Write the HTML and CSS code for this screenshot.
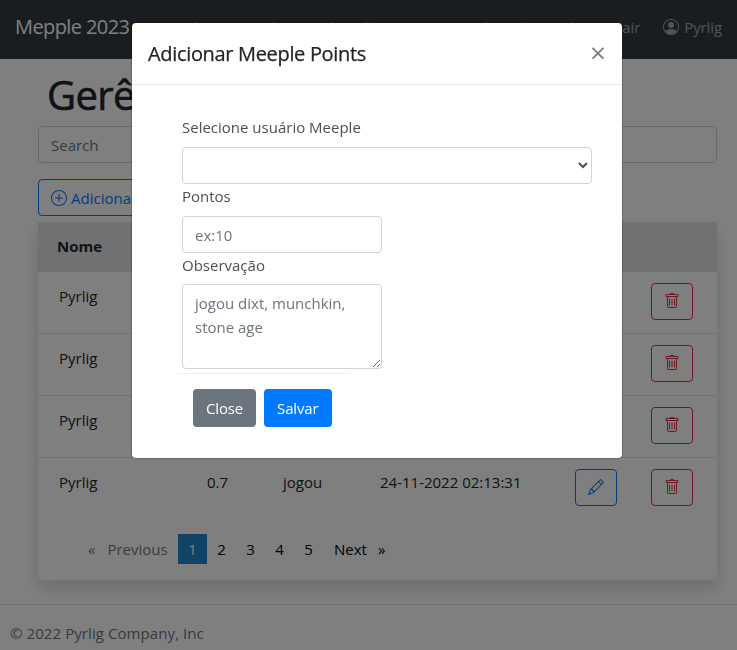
FILE: index.html
```html
<!DOCTYPE html>
<html lang="pt">
<head>
<meta charset="utf-8">
<title>Meeple 2023</title>
<link rel="stylesheet" href="styles.css">
</head>
<body>
<nav class="navbar">
  <a class="brand">Mepple 2023</a>
  <div class="nav-links">
    <a>Ranking Pessoal</a>
    <a>Ranking de Grupos</a>
    <a>Ranking de Membros</a>
  </div>
  <div class="nav-right">
    <a>Sair</a>
    <a class="user">
      <svg class="icon-user" viewBox="0 0 16 16" fill="currentColor"><path d="M11 6a3 3 0 1 1-6 0 3 3 0 0 1 6 0z"/><path fill-rule="evenodd" d="M0 8a8 8 0 1 1 16 0A8 8 0 0 1 0 8zm8-7a7 7 0 0 0-5.468 11.37C3.242 11.226 4.805 10 8 10s4.757 1.225 5.468 2.37A7 7 0 0 0 8 1z"/></svg>
      Pyrlig
    </a>
  </div>
</nav>
<main class="content">
  <h1 class="title">Gerênciar Pontos</h1>
  <input class="search" type="text" placeholder="Search">
  <button class="btn-add">
    <svg class="icon-plus" viewBox="0 0 16 16" fill="currentColor"><path d="M8 15A7 7 0 1 1 8 1a7 7 0 0 1 0 14zm0 1A8 8 0 1 0 8 0a8 8 0 0 0 0 16z"/><path d="M8 4a.5.5 0 0 1 .5.5v3h3a.5.5 0 0 1 0 1h-3v3a.5.5 0 0 1-1 0v-3h-3a.5.5 0 0 1 0-1h3v-3A.5.5 0 0 1 8 4z"/></svg>
    Adicionar Pontos
  </button>
  <section class="card">
    <table class="table">
      <thead>
        <tr><th>Nome</th><th>Pontos</th><th>Obs</th><th>Data</th><th></th><th></th></tr>
      </thead>
      <tbody>
        <tr><td>Pyrlig</td><td>1.2</td><td>jogou</td><td>24-11-2022 02:20:10</td>
          <td><button class="icon-btn edit"><svg viewBox="0 0 16 16" fill="currentColor"><use href="#pencil"/></svg></button></td>
          <td><button class="icon-btn del"><svg viewBox="0 0 16 16" fill="currentColor"><use href="#trash"/></svg></button></td></tr>
        <tr><td>Pyrlig</td><td>0.5</td><td>jogou</td><td>24-11-2022 02:18:44</td>
          <td><button class="icon-btn edit"><svg viewBox="0 0 16 16" fill="currentColor"><use href="#pencil"/></svg></button></td>
          <td><button class="icon-btn del"><svg viewBox="0 0 16 16" fill="currentColor"><use href="#trash"/></svg></button></td></tr>
        <tr><td>Pyrlig</td><td>0.9</td><td>jogou</td><td>24-11-2022 02:15:02</td>
          <td><button class="icon-btn edit"><svg viewBox="0 0 16 16" fill="currentColor"><use href="#pencil"/></svg></button></td>
          <td><button class="icon-btn del"><svg viewBox="0 0 16 16" fill="currentColor"><use href="#trash"/></svg></button></td></tr>
        <tr><td>Pyrlig</td><td>0.7</td><td>jogou</td><td>24-11-2022 02:13:31</td>
          <td><button class="icon-btn edit"><svg viewBox="0 0 16 16" fill="currentColor"><use href="#pencil"/></svg></button></td>
          <td><button class="icon-btn del"><svg viewBox="0 0 16 16" fill="currentColor"><use href="#trash"/></svg></button></td></tr>
      </tbody>
    </table>
    <ul class="pagination">
      <li class="disabled"><span class="chev">«</span>Previous</li>
      <li class="page current">1</li>
      <li class="page">2</li>
      <li class="page">3</li>
      <li class="page">4</li>
      <li class="page">5</li>
      <li class="more">Next<span class="chev next">»</span></li>
    </ul>
  </section>
</main>
<footer class="footer">© 2022 Pyrlig Company, Inc</footer>

<svg class="defs" aria-hidden="true">
  <symbol id="pencil" viewBox="0 0 16 16"><path d="M12.146.146a.5.5 0 0 1 .708 0l3 3a.5.5 0 0 1 0 .708l-10 10a.5.5 0 0 1-.168.11l-5 2a.5.5 0 0 1-.65-.65l2-5a.5.5 0 0 1 .11-.168l10-10zM11.207 2.5 13.5 4.793 14.793 3.5 12.5 1.207 11.207 2.5zm1.586 3L10.5 3.207 4 9.707V10h.5a.5.5 0 0 1 .5.5v.5h.5a.5.5 0 0 1 .5.5v.5h.293l6.5-6.5zm-9.761 5.175-.106.106-1.528 3.821 3.821-1.528.106-.106A.5.5 0 0 1 5 12.5V12h-.5a.5.5 0 0 1-.5-.5V11h-.5a.5.5 0 0 1-.468-.325z"/></symbol>
  <symbol id="trash" viewBox="0 0 16 16"><path d="M5.5 5.5A.5.5 0 0 1 6 6v6a.5.5 0 0 1-1 0V6a.5.5 0 0 1 .5-.5zm2.5 0a.5.5 0 0 1 .5.5v6a.5.5 0 0 1-1 0V6a.5.5 0 0 1 .5-.5zm3 .5a.5.5 0 0 0-1 0v6a.5.5 0 0 0 1 0V6z"/><path fill-rule="evenodd" d="M14.5 3a1 1 0 0 1-1 1H13v9a2 2 0 0 1-2 2H5a2 2 0 0 1-2-2V4h-.5a1 1 0 0 1-1-1V2a1 1 0 0 1 1-1H6a1 1 0 0 1 1-1h2a1 1 0 0 1 1 1h3.5a1 1 0 0 1 1 1v1zM4.118 4 4 4.059V13a1 1 0 0 0 1 1h6a1 1 0 0 0 1-1V4.059L11.882 4H4.118zM2.5 3V2h11v1h-11z"/></symbol>
</svg>

<div class="backdrop"></div>
<div class="modal" role="dialog">
  <header class="modal-header">
    <h5 class="modal-title">Adicionar Meeple Points</h5>
    <span class="close">×</span>
  </header>
  <form class="modal-body">
    <label class="label first">Selecione usuário Meeple</label>
    <select class="control select"><option></option></select>
    <label class="label">Pontos</label>
    <input class="control short" type="text" placeholder="ex:10">
    <label class="label">Observação</label>
    <textarea class="control short area" placeholder="jogou dixt, munchkin, stone age"></textarea>
    <hr class="rule">
    <div class="actions">
      <button type="button" class="btn btn-close">Close</button>
      <button type="button" class="btn btn-save">Salvar</button>
    </div>
  </form>
</div>
</body>
</html>
```
FILE: styles.css
```css
* { box-sizing: border-box; }
html, body { height: 100%; }
body {
  margin: 0;
  height: 650px;
  overflow: hidden;
  background: #fff;
  color: #212529;
  font-family: "Open Sans", "Noto Sans", sans-serif;
  font-size: 15px;
  line-height: 24px;
}
.defs { display: none; }

.navbar {
  display: flex;
  align-items: center;
  height: 59px;
  padding: 0 15px 5px;
  background: #343a40;
  color: rgba(255, 255, 255, .55);
  white-space: nowrap;
}
.brand { font-size: 20px; letter-spacing: -0.6px; color: #fff; margin-right: 39px; }
.nav-links { display: flex; gap: 29px; letter-spacing: -0.4px; }
.nav-right { display: flex; align-items: center; gap: 23px; margin-left: auto; letter-spacing: -0.1px; }
.user { display: flex; align-items: center; gap: 5px; }
.icon-user { width: 16px; height: 16px; }

.content { padding: 0 20px 0 38px; height: 546px; border-bottom: 1px solid #dee2e6; }
.title {
  margin: 0;
  padding: 12px 0 0 9px;
  height: 67px;
  font-size: 40px;
  line-height: 48px;
  font-weight: 400;
  letter-spacing: -0.6px;
  -webkit-text-stroke: 0.6px currentColor;
  white-space: nowrap;
}
.search {
  display: block;
  width: 100%;
  height: 37px;
  padding: 0 12px;
  border: 1px solid #ced4da;
  border-radius: 4px;
  font: inherit;
}
.search::placeholder, .control::placeholder { color: #6c757d; opacity: 1; }
.btn-add {
  display: flex;
  align-items: center;
  gap: 4px;
  height: 37px;
  margin-top: 16px;
  padding: 0 12px;
  border: 1px solid #007bff;
  border-radius: 4px;
  background: transparent;
  color: #007bff;
  font: inherit;
}
.icon-plus { width: 16px; height: 16px; }
.card {
  margin-top: 6px;
  height: 358px;
  border-radius: 4px;
  box-shadow: 0 8px 16px rgba(0, 0, 0, .15);
}
.table { width: 100%; border-collapse: collapse; table-layout: fixed; }
.table th {
  height: 49px;
  padding: 0 19px;
  background: #e0e3e6;
  text-align: left;
  font-weight: 700;
}
.table th:nth-child(1) { width: 150px; }
.table th:nth-child(2) { width: 76px; }
.table th:nth-child(3) { width: 97px; }
.table th:nth-child(4) { width: 195px; }
.table th:nth-child(5) { width: 76px; }
.table td {
  height: 62px;
  padding: 12px 0 0 19px;
  vertical-align: top;
  border-top: 1px solid #dee2e6;
  white-space: nowrap;
}
.table td:nth-child(1) { padding-left: 21px; }
.table td:nth-child(5), .table td:nth-child(6) { padding-top: 11px; }
.icon-btn {
  display: flex;
  align-items: center;
  justify-content: center;
  width: 42px;
  height: 37px;
  padding: 0;
  background: transparent;
  border: 1px solid;
  border-radius: 4px;
}
.icon-btn svg { width: 16px; height: 16px; }
.edit { color: #007bff; }
.del { color: #dc3545; }

.pagination {
  display: flex;
  align-items: center;
  height: 30px;
  margin: 15px 0 0 50px;
  padding: 0;
  list-style: none;
  color: #000;
}
.pagination li { height: 30px; line-height: 30px; }
.pagination .disabled { color: #777; width: 90px; }
.pagination .page { width: 29px; text-align: center; }
.pagination .current { background: #1e88d0; color: #fff; }
.pagination .more { padding-left: 11px; }
.chev { margin-right: 12px; }
.chev.next { margin: 0 0 0 11px; }

.footer { padding: 16px 10px; color: #6c757d; letter-spacing: .08px; }

.backdrop { position: fixed; inset: 0; background: rgba(0, 0, 0, .5); }
.modal {
  position: fixed;
  top: 23px;
  left: 132px;
  width: 490px;
  height: 435px;
  background: #fff;
  border-radius: 4px;
  box-shadow: 0 0 0 1px rgba(0, 0, 0, .2);
  color: #495057;
}
.modal-header {
  display: flex;
  justify-content: space-between;
  align-items: center;
  height: 62px;
  padding: 0 16px;
  border-bottom: 1px solid #e9ecef;
}
.modal-title {
  margin: 0;
  font-size: 20px;
  font-weight: 400;
  letter-spacing: -0.33px;
  -webkit-text-stroke: 0.25px currentColor;
  color: #212529;
  line-height: 30px;
}
.close { font-size: 28px; font-weight: 400; color: #7f7f7f; line-height: 24px; margin: -4px 0 0 0; }
.modal-body { display: flex; flex-direction: column; align-items: flex-start; padding: 30px 30px 0 50px; }
.label { display: block; height: 24px; line-height: 24px; }
.label.first { margin-bottom: 8px; }
.control {
  display: block;
  height: 37px;
  padding: 0 12px;
  border: 1px solid #ced4da;
  border-radius: 4px;
  background: #fff;
  color: #495057;
  font: inherit;
}
.label + .control.short { margin-top: 8px; }
.select { width: 100%; }
.short { width: 200px; }
.label + .control.area { height: 85px; margin-top: 7px; padding: 6px 12px; resize: vertical; }
.rule { width: 170px; height: 1px; margin: 4px 0 0 -4px; border: 0; background: #f0f1f2; }
.actions { display: flex; gap: 8px; margin: 15px 0 0 11px; }
.btn { height: 38px; padding: 0 12px; border: 1px solid transparent; border-radius: 4px; color: #fff; font: inherit; letter-spacing: -0.15px; }
.btn-close { background: #6c757d; }
.btn-save { background: #007bff; }
```
